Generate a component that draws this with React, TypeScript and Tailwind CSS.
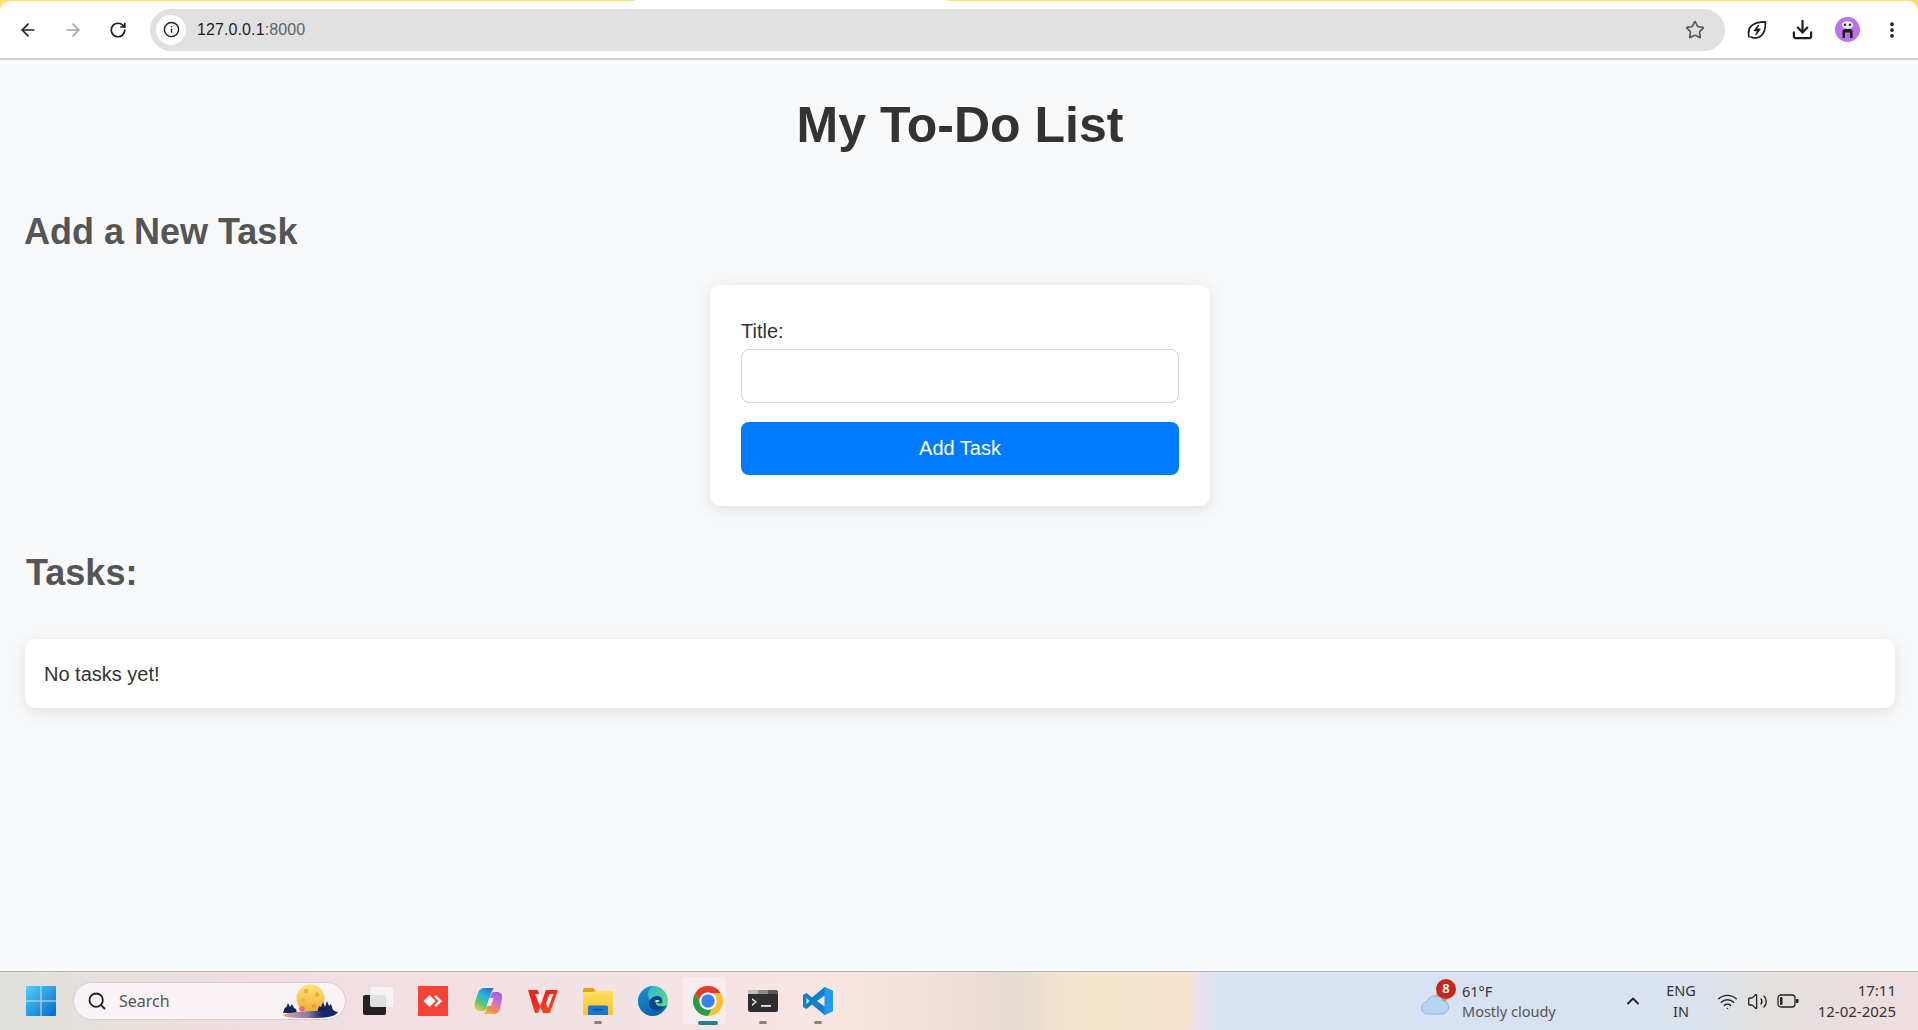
import React from "react";
import { ArrowLeft, ArrowRight, RotateCw, Info, Star, Download, Search, ChevronUp, Wifi, Volume2, MoreVertical } from "lucide-react";

const font = "font-['Liberation_Sans',Arial,sans-serif]";
const seg = "font-['Segoe_UI','Noto_Sans','Open_Sans',sans-serif]";

function ToolBtn({ children, w = "w-[45px]" }: { children: React.ReactNode; w?: string }) {
  return <div className={`${w} h-[40px] flex items-center justify-center shrink-0`}>{children}</div>;
}

function Leaf() {
  return (
    <svg width="20" height="20" viewBox="0 0 20 20" fill="none" stroke="#1f1f1f" strokeWidth="1.7" strokeLinejoin="round" strokeLinecap="round">
      <path d="M2 16.8c-.9-4.2-.4-8.3 2.3-10.9C7.2 3 12.8 1.8 18.4 1.8c.2 5.300-.8 10.700-3.800 13.600-2.900 2.800-7 3.200-10.500 1.500" />
      <path d="M11.300 5.500 7.500 10.600h3.600L9 14.500l4-5.300H9.500" strokeWidth="1.400" />
    </svg>
  );
}

function Avatar() {
  return (
    <div className="w-[25px] h-[25px] rounded-full bg-[#b973e4] flex items-center justify-center">
      <svg width="15" height="19" viewBox="0 0 15 19">
        <ellipse cx="7.500" cy="5" rx="5.500" ry="3.800" fill="#f2f2f2" />
        <circle cx="5" cy="4.800" r="1.200" fill="#222" />
        <circle cx="10" cy="4.800" r="1.200" fill="#222" />
        <path d="M2.500 18V11.500C2.500 9.500 4.500 9 7.500 9s5 .5 5 2.500V18H10v-5.500H5V18z" fill="#1d1d1d" />
      </svg>
    </div>
  );
}

function Toolbar() {
  return (
    <div className="h-[60px] shrink-0 bg-[linear-gradient(90deg,#fde06a_632px,#ffffff_636px,#ffffff_946px,#fde06a_950px)] border-b-2 border-[#cfcfcf]">
      <div className="h-[57px] mt-[1px] bg-white rounded-t-[10px] flex items-center pl-[5px]">
        <ToolBtn><ArrowLeft size={20} color="#1f1f1f" strokeWidth={2} /></ToolBtn>
        <ToolBtn><ArrowRight size={20} color="#a3a3a3" strokeWidth={2} /></ToolBtn>
        <ToolBtn><RotateCw size={18} color="#1f1f1f" strokeWidth={2.300} /></ToolBtn>
        <div className="ml-[10px] w-[1575px] h-[42px] rounded-full bg-[#e1e1e1] flex items-center pl-[6px] pr-[20px] shrink-0">
          <div className="w-[30px] h-[30px] rounded-full bg-white flex items-center justify-center shrink-0">
            <Info size={17} color="#1f1f1f" strokeWidth={2} />
          </div>
          <div className={`ml-[11px] text-[16px] tracking-[0.1px] ${font} flex-1`}>
            <span className="text-[#1f1f1f]">127.0.0.1</span>
            <span className="text-[#5f6368]">:8000</span>
          </div>
          <Star size={20} color="#5a5a5a" strokeWidth={2} />
        </div>
        <ToolBtn w="w-[24px] ml-[20px]"><Leaf /></ToolBtn>
        <ToolBtn w="w-[46px] ml-[10px]"><Download size={23} color="#1f1f1f" strokeWidth={2.300} /></ToolBtn>
        <ToolBtn w="w-[25px] ml-[10px]"><Avatar /></ToolBtn>
        <ToolBtn w="w-[20px] ml-[22px]"><MoreVertical size={20} color="#1f1f1f" strokeWidth={2.500} /></ToolBtn>
      </div>
    </div>
  );
}

function Content() {
  return (
    <main className={`flex-1 min-h-0 bg-[#f8f9fa] pl-[25px] pr-[23px] ${font} text-[#333]`}>
      <h1 className="text-[50px] leading-[55px] font-bold text-[#333] text-center mt-[38px]">My To-Do List</h1>
      <h2 className="text-[36px] leading-[41px] font-bold text-[#555] mt-[58px] -ml-[1px]">Add a New Task</h2>
      <form className="w-[500px] mx-auto mt-[33px] bg-white rounded-[10px] px-[31px] pt-[35px] pb-[31px] shadow-[0_4px_15px_rgba(0,0,0,0.1)]">
        <label className="block text-[20px] leading-[23px] text-[#333] mb-[6px]">Title:</label>
        <div className="h-[54px] rounded-[8px] border border-[#d5d5d5] bg-white" />
        <button type="button" className="mt-[19px] w-full h-[53px] rounded-[8px] bg-[#007bff] text-white text-[20px] pb-[2px]">Add Task</button>
      </form>
      <h2 className="text-[36px] leading-[41px] font-bold text-[#555] mt-[46px] ml-[1px]">Tasks:</h2>
      <div className="mt-[46px] h-[69px] bg-white rounded-[10px] shadow-[0_4px_15px_rgba(0,0,0,0.1)] px-[19px] flex items-center text-[20px] text-[#333]">No tasks yet!</div>
    </main>
  );
}

function WinLogo() {
  return (
    <svg width="30" height="30" viewBox="0 0 30 30">
      <defs>
        <linearGradient id="wl" x1="0" y1="0" x2="1" y2="1">
          <stop offset="0" stopColor="#4fd0fb" />
          <stop offset="1" stopColor="#0669c8" />
        </linearGradient>
      </defs>
      <path d="M1 0h13.500v14.500H0V1a1 1 0 0 1 1-1zM15.500 0H29a1 1 0 0 1 1 1v13.500H15.500zM0 15.500h14.500V30H1a1 1 0 0 1-1-1zM15.500 15.500H30V29a1 1 0 0 1-1 1H15.500z" fill="url(#wl)" />
    </svg>
  );
}

function Moon() {
  return (
    <svg width="58" height="38" viewBox="0 0 58 38" className="absolute right-[6px] top-[-1px]">
      <defs>
        <linearGradient id="mn" x1="0" y1="0" x2="0" y2="1">
          <stop offset="0" stopColor="#fde27a" />
          <stop offset="1" stopColor="#f2ad2e" />
        </linearGradient>
        <linearGradient id="gr" x1="0" y1="0" x2="1" y2="0">
          <stop offset="0" stopColor="#e8a0a0" />
          <stop offset="0.450" stopColor="#8a7aa8" />
          <stop offset="0.700" stopColor="#1b2a6c" />
          <stop offset="1" stopColor="#14226a" />
        </linearGradient>
      </defs>
      <circle cx="29.500" cy="16.500" r="14" fill="url(#mn)" />
      <circle cx="25" cy="9" r="2.200" fill="#e7b03c" />
      <circle cx="36" cy="13" r="2.400" fill="#e7b03c" />
      <circle cx="22" cy="18" r="1.800" fill="#eab040" />
      <circle cx="33" cy="24" r="2.200" fill="#ee9a3e" />
      <circle cx="21" cy="27" r="2.800" fill="#e8705a" />
      <path d="M2 31l2-6 1 1 2-5 2 4 2-3 2 4 2 1 1 4zM36 30l2-6 2 1 2-5 2 5 2-6 2 5 2-2 2 6 5 3-21 0z" fill="#14265e" />
      <path d="M2 33c8-4 40-5 55-3-3 4-8 6-26 6-13 0-27 0-29-3z" fill="url(#gr)" />
    </svg>
  );
}

function Copilot() {
  return (
    <svg width="30" height="28" viewBox="0 0 30 28">
      <defs>
        <linearGradient id="cl" x1="0.700" y1="0" x2="0.200" y2="1">
          <stop offset="0" stopColor="#2277e0" />
          <stop offset="0.350" stopColor="#25b4e0" />
          <stop offset="0.700" stopColor="#58c878" />
          <stop offset="1" stopColor="#f4c83a" />
        </linearGradient>
        <linearGradient id="cr" x1="0.700" y1="0" x2="0.300" y2="1">
          <stop offset="0" stopColor="#9a5fe0" />
          <stop offset="0.450" stopColor="#d874c0" />
          <stop offset="0.800" stopColor="#f58a4c" />
          <stop offset="1" stopColor="#f7b04a" />
        </linearGradient>
      </defs>
      <path d="M12 27H20C24 27 26 25 27 22L29 12C30 7 27 5 24 5H21C19 5 18 7 17 10L14 20C13 23 12.500 25 11 27z" fill="url(#cr)" />
      <path d="M21 1H12C8 1 6 3 5 6L2 15C.5 21 3 24 7 24H10C12 24 13 22 14 19L17 9C18 6 19 3 21 1z" fill="url(#cl)" />
      <path d="M16.300 11h4.200L18 19h-4.300z" fill="#f5e6ea" />
    </svg>
  );
}

function Wps() {
  return (
    <svg width="30" height="23" viewBox="0 0 30 23">
      <defs>
        <linearGradient id="wp" x1="0" y1="0" x2="1" y2="1">
          <stop offset="0.400" stopColor="#ee2522" />
          <stop offset="1" stopColor="#fb5a1a" />
        </linearGradient>
      </defs>
      <path d="M0 0h9.500l4.500 11L18 0h12l-8 23h-7l-2.500-6-2.500 6H7z" fill="url(#wp)" />
      <path d="M7 4h5l2.500 6.500L12 16z" fill="#fdf0f0" />
      <path d="M21.500 4h4L20 18l-2-4.500z" fill="#fdf0f0" />
    </svg>
  );
}

function Folder() {
  return (
    <svg width="30" height="27" viewBox="0 0 30 27">
      <defs>
        <linearGradient id="fo" x1="0" y1="0" x2="0" y2="1">
          <stop offset="0" stopColor="#ffdf60" />
          <stop offset="1" stopColor="#fcc22f" />
        </linearGradient>
      </defs>
      <path d="M0 2a2 2 0 0 1 2-2h8l3 3h17v6H0z" fill="#dfa214" />
      <path d="M0 4h10l2-1h18v24H0z" fill="url(#fo)" />
      <path d="M5 19a1.500 1.500 0 0 1 1.500-1.500h17A1.500 1.500 0 0 1 25 19v8H5z" fill="#1578cc" />
      <rect x="10" y="21" width="10" height="1.500" fill="#0b4f96" />
    </svg>
  );
}

function Edge() {
  return (
    <svg width="30" height="30" viewBox="0 0 30 30">
      <defs>
        <linearGradient id="eg" x1="0" y1="0" x2="1" y2="0.800">
          <stop offset="0.200" stopColor="#2bb5e0" />
          <stop offset="1" stopColor="#6ade6a" />
        </linearGradient>
        <linearGradient id="eb" x1="0" y1="0" x2="0.500" y2="1">
          <stop offset="0" stopColor="#1a96dc" />
          <stop offset="1" stopColor="#0f5fa8" />
        </linearGradient>
      </defs>
      <circle cx="15" cy="15" r="15" fill="url(#eg)" />
      <path d="M0 15C0 7 7 1 15 0c-5 3-6 8-4 13 3 6 12 9 18 6-2 6-8 11-14 11C6 30 0 23 0 15z" fill="url(#eb)" />
      <path d="M11 18c0-5 4-8 8-8 4 0 6 3 5 7-2 1-5 0-6-2-1 3 1 7 8 6-2 3-6 4-9 3-4-1-6-3-6-6z" fill="#0b4585" />
      <path d="M16.500 15.500c1-1.500 4-2 5.500-.5-1.500 1-4 1.200-5.500.5z" fill="#e6f4f4" />
    </svg>
  );
}

function Chrome() {
  return (
    <svg width="30" height="30" viewBox="0 0 30 30">
      <path d="M28 7.500A15 15 0 0 0 2 7.500L8.500 18.750 15 7.500z" fill="#e33b2e" />
      <path d="M2 7.500A15 15 0 0 0 15 30L21.500 18.750H8.500z" fill="#2a9c46" />
      <path d="M15 30A15 15 0 0 0 28 7.500H15l6.500 11.250z" fill="#fbc02d" />
      <circle cx="15" cy="15" r="8.700" fill="#fff" />
      <circle cx="15" cy="15" r="6.700" fill="#3c80ec" />
    </svg>
  );
}

function Term() {
  return (
    <svg width="30" height="24" viewBox="0 0 30 24">
      <rect width="30" height="22" y="1" rx="2.500" fill="#2e2e2e" />
      <path d="M0 3.500A2.500 2.500 0 0 1 2.500 1H10v4H0z" fill="#bdbdbd" />
      <path d="M10 1h10v4H10z" fill="#8a8a8a" />
      <path d="M20 1h7.500A2.500 2.500 0 0 1 30 3.500V5H20z" fill="#5a5a5a" />
      <path d="M4 9l5 4-5 4v-2l3-2-3-2z" fill="#e8e8e8" />
      <rect x="13" y="16" width="10" height="1.800" fill="#e8e8e8" />
    </svg>
  );
}

function VSCode() {
  return (
    <svg width="30" height="30" viewBox="0 0 30 30">
      <path d="M21.500 1 30 5v20l-8.500 4L9 18.500 3.500 23 0 21v-12l3.500-2L9 11.500z" fill="#0e7fcb" />
      <path d="M21.500 1 30 5v20l-8.500 4z" fill="#1f9cf0" />
      <path d="M21.500 9.500 14 15l7.500 5.500z" fill="#f6e7e4" />
      <path d="M3.500 12 6.500 15l-3 3z" fill="#f6e7e4" />
    </svg>
  );
}

function TaskIcon({ children, dot, active }: { children: React.ReactNode; dot?: boolean; active?: boolean }) {
  return (
    <div className="relative w-[55px] h-[48px] flex items-center justify-center shrink-0">
      {active && <div className="absolute left-[3px] top-0 w-[43px] h-[47px] rounded-[4px] bg-[#f7ecee] shadow-[5px_0_0_#f4e3e3]" />}
      <div className="relative">{children}</div>
      {dot && <div className="absolute bottom-[1px] left-1/2 -translate-x-1/2 w-[8px] h-[3px] rounded-full bg-[#8a8181]" />}
      {active && <div className="absolute bottom-0 left-1/2 -translate-x-1/2 w-[20px] h-[4px] rounded-full bg-[#26808f]" />}
    </div>
  );
}

function Taskbar() {
  return (
    <footer className={`h-[59px] shrink-0 border-t-[1px] border-[#b9b6b6] bg-[linear-gradient(90deg,#dfe1dc_0px,#e7dfda_130px,#f0dde0_260px,#f5e4e4_700px,#f7e6e0_860px,#efdcd9_963px,#e4dcd2_1015px,#f2e4cd_1067px,#f5e6cc_1101px,#f6e3d0_1187px,#e8e0ee_1201px,#d9e3f2_1222px,#d8e2f2_1500px,#dbe3ee_1700px,#e3e0de_1770px,#f0dde0_1918px)] flex items-center ${seg}`}>
      <div className="ml-[26px] w-[30px] shrink-0"><WinLogo /></div>
      <div className="relative ml-[17px] w-[273px] h-[38px] rounded-full bg-[#f9f3f5] border border-[#d9cfd2] flex items-center shrink-0">
        <Search size={20} color="#222" strokeWidth={2.200} className="ml-[13px]" />
        <span className="ml-[12px] text-[16px] text-[#555]">Search</span>
        <Moon />
      </div>
      <div className="ml-[4px] flex items-center">
        <TaskIcon>
          <div className="relative w-[30px] h-[28px]">
            <div className="absolute left-0 bottom-0 w-[23px] h-[20px] rounded-[2px] bg-[#222]" />
            <div className="absolute right-0 top-0 w-[23px] h-[20px] rounded-[2px] bg-[#f5f5f5]/90" />
          </div>
        </TaskIcon>
        <TaskIcon>
          <div className="w-[30px] h-[30px] bg-[#f44336] flex items-center justify-center">
            <svg width="20" height="14" viewBox="0 0 20 14"><path d="M6.500 1 .5 7l6 6 6-6z" fill="#fff" /><path d="M13 1l6 6-6 6-1.800-1.800L15.400 7l-4.200-4.200z" fill="#fff" /></svg>
          </div>
        </TaskIcon>
        <TaskIcon><Copilot /></TaskIcon>
        <TaskIcon><Wps /></TaskIcon>
        <TaskIcon dot><Folder /></TaskIcon>
        <TaskIcon><Edge /></TaskIcon>
        <TaskIcon active><Chrome /></TaskIcon>
        <TaskIcon dot><Term /></TaskIcon>
        <TaskIcon dot><VSCode /></TaskIcon>
      </div>
      <div className="flex-1" />
      <div className="relative w-[43px] h-[36px] shrink-0">
        <svg width="32" height="26" viewBox="0 0 32 26" className="absolute left-[2px] top-[7px]">
          <circle cx="21" cy="6" r="6" fill="#f08a2c" />
          <path d="M7 24a6 6 0 0 1-1-12c1-4 5-7 9-6 3 0 6 2 7 5a6 6 0 0 1 3 11c-1 2-3 2-5 2z" fill="#b9d4f2" stroke="#8ab4e6" strokeWidth="1" />
        </svg>
        <div className="absolute left-[17px] top-[-4px] w-[20px] h-[20px] rounded-full bg-[#c4281c] text-white text-[13px] font-semibold flex items-center justify-center">8</div>
      </div>
      <div className="w-[120px] shrink-0 leading-[20px] -mt-[1px]">
        <div className="text-[14.500px] text-[#333]">61°F</div>
        <div className="text-[14.500px] text-[#555]">Mostly cloudy</div>
      </div>
      <ChevronUp size={20} color="#222" strokeWidth={2.200} className="ml-[41px] shrink-0" />
      <div className="ml-[20px] w-[36px] shrink-0 text-center text-[14.500px] leading-[21px] text-[#333] -mt-[1px]">
        <div>ENG</div>
        <div>IN</div>
      </div>
      <div className="ml-[18px] flex items-center gap-[9px] shrink-0">
        <Wifi size={21} color="#222" strokeWidth={1.700} />
        <Volume2 size={21} color="#222" strokeWidth={1.500} />
        <svg width="22" height="14" viewBox="0 0 22 14" fill="none">
          <rect x="1" y="1" width="17" height="12" rx="3" stroke="#222" strokeWidth="1.300" />
          <rect x="3" y="3" width="2.500" height="8" rx="1" fill="#222" />
          <path d="M19 5h1.500a1 1 0 0 1 1 1v2a1 1 0 0 1-1 1H19z" fill="#222" />
        </svg>
      </div>
      <div className="ml-[7px] mr-[22px] w-[90px] shrink-0 text-right text-[15px] leading-[21px] text-[#333] -mt-[1px]">
        <div>17:11</div>
        <div>12-02-2025</div>
      </div>
    </footer>
  );
}

export default function App() {
  return (
    <div className="w-[1918px] h-[1030px] flex flex-col overflow-hidden">
      <Toolbar />
      <Content />
      <Taskbar />
    </div>
  );
}
